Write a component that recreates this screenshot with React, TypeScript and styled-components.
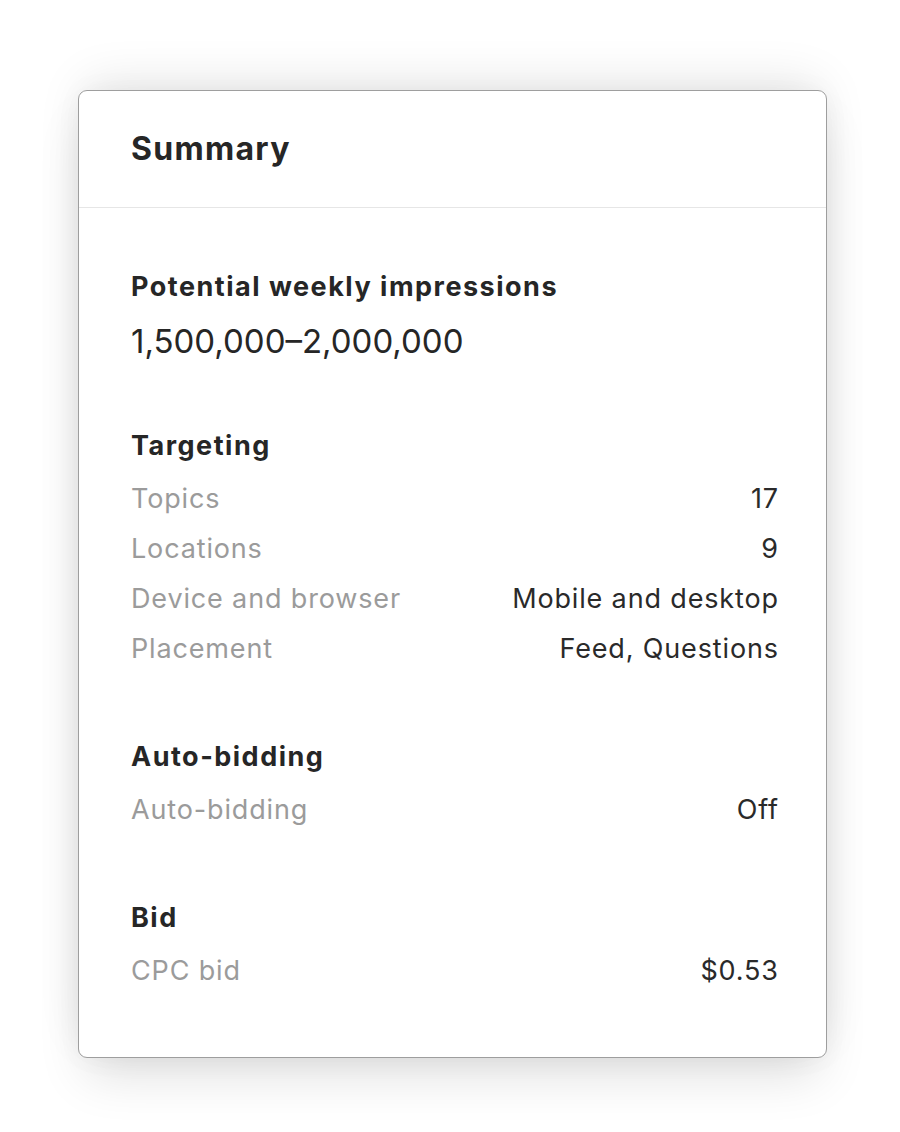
import styled, { createGlobalStyle } from "styled-components";

const GlobalStyle = createGlobalStyle`
  html, body {
    margin: 0;
    padding: 0;
    background: #ffffff;
  }
  body {
    font-family: Inter, "Noto Sans", "Liberation Sans", sans-serif;
    -webkit-font-smoothing: antialiased;
  }
`;

interface Row {
  label: string;
  value: string;
}

interface Section {
  title: string;
  rows: Row[];
}

const sections: Section[] = [
  {
    title: "Targeting",
    rows: [
      { label: "Topics", value: "17" },
      { label: "Locations", value: "9" },
      { label: "Device and browser", value: "Mobile and desktop" },
      { label: "Placement", value: "Feed, Questions" },
    ],
  },
  {
    title: "Auto-bidding",
    rows: [{ label: "Auto-bidding", value: "Off" }],
  },
  {
    title: "Bid",
    rows: [{ label: "CPC bid", value: "$0.53" }],
  },
];

export default function App() {
  return (
    <>
      <GlobalStyle />
      <Page>
        <Card>
          <CardHeader>
            <Title>Summary</Title>
          </CardHeader>
          <CardBody>
            <Block>
              <SectionTitle>Potential weekly impressions</SectionTitle>
              <BigValue>1,500,000–2,000,000</BigValue>
            </Block>
            {sections.map((section) => (
              <Block key={section.title}>
                <SectionTitle>{section.title}</SectionTitle>
                <Rows>
                  {section.rows.map((row) => (
                    <RowItem key={row.label}>
                      <Label>{row.label}</Label>
                      <Value>{row.value}</Value>
                    </RowItem>
                  ))}
                </Rows>
              </Block>
            ))}
          </CardBody>
        </Card>
      </Page>
    </>
  );
}

const Page = styled.div`
  width: 900px;
  height: 1132px;
  padding: 90px 73px 0 78px;
  box-sizing: border-box;
  background: #ffffff;
`;

const Card = styled.div`
  width: 749px;
  box-sizing: border-box;
  background: #ffffff;
  border: 1.5px solid #9e9e9e;
  border-radius: 9px;
  box-shadow: 0 -14px 50px -8px rgba(0, 0, 0, 0.11),
    0 26px 50px -8px rgba(0, 0, 0, 0.12), 0 0 30px rgba(0, 0, 0, 0.03);
  overflow: hidden;
`;

const CardHeader = styled.div`
  height: 116px;
  display: flex;
  align-items: center;
  padding: 0 52px;
  border-bottom: 1px solid #e6e6e6;
`;

const Title = styled.h1`
  margin: 0;
  font-size: 32px;
  line-height: 40px;
  font-weight: 700;
  color: #262626;
  letter-spacing: 1.3px;
`;

const CardBody = styled.div`
  display: flex;
  flex-direction: column;
  gap: 65px;
  padding: 61px 48px 61px 52px;
`;

const Block = styled.div`
  display: flex;
  flex-direction: column;
`;

const SectionTitle = styled.h2`
  margin: 0;
  font-size: 27px;
  line-height: 36px;
  font-weight: 700;
  color: #262626;
  letter-spacing: 1.5px;
`;

const BigValue = styled.div`
  margin-top: 14px;
  font-size: 33px;
  line-height: 44px;
  font-weight: 400;
  color: #262626;
`;

const Rows = styled.div`
  margin-top: 10px;
  display: flex;
  flex-direction: column;
`;

const RowItem = styled.div`
  display: flex;
  justify-content: space-between;
  align-items: center;
  height: 50px;
  font-size: 27px;
  line-height: 50px;
  letter-spacing: 0.85px;
`;

const Label = styled.span`
  color: #9b9b9b;
`;

const Value = styled.span`
  color: #2a2a2a;
  margin-right: -0.85px;
`;
